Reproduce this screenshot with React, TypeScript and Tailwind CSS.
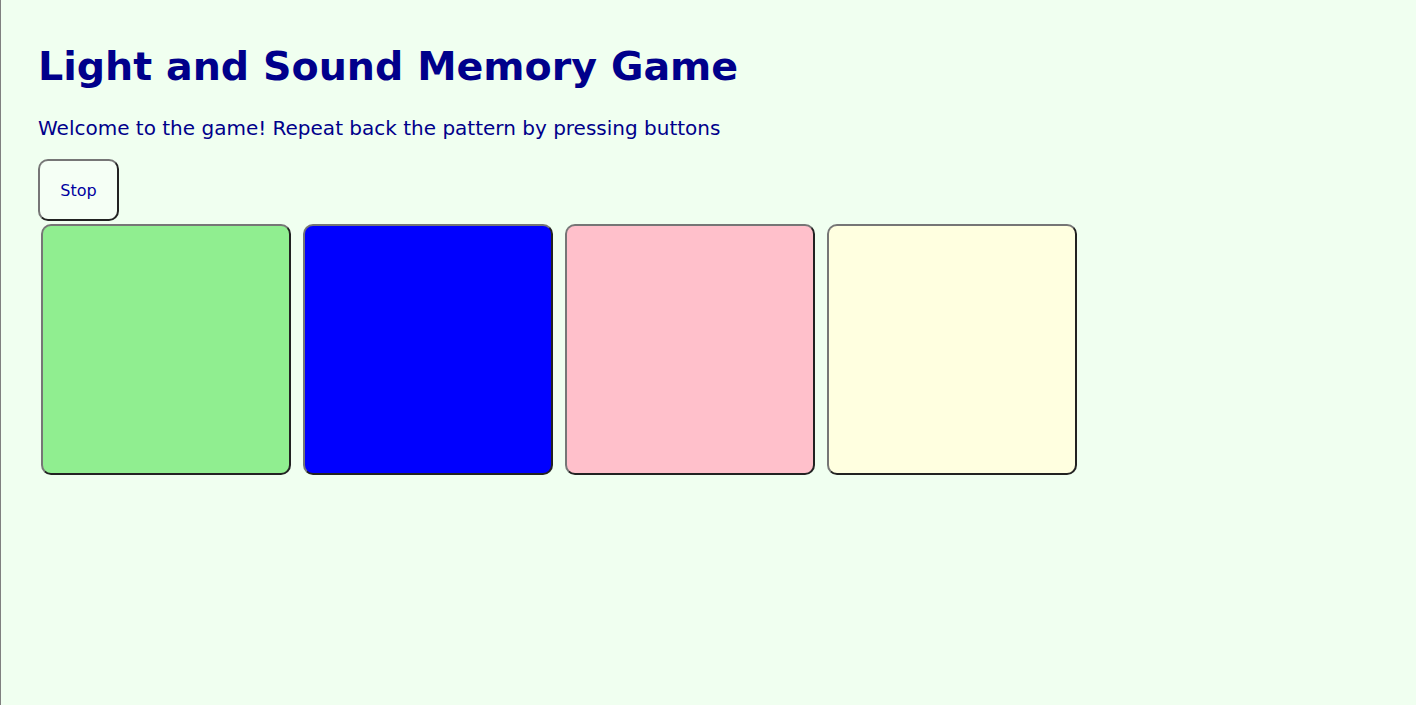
import React from "react";

const pads = [
	{ id: 1, color: "bg-[#90ee90]" },
	{ id: 2, color: "bg-[#0000ff]" },
	{ id: 3, color: "bg-[#ffc0cb]" },
	{ id: 4, color: "bg-[#ffffe0]" },
];

const App = () => {
	return (
		<div className="min-h-[705px] bg-[#f0fff0] border-l border-[#808080] px-[37px] pt-[43px] font-['DejaVu_Sans',Verdana,sans-serif] text-[#00008b]">
			<h1 className="text-[39.6px] font-bold leading-[46px]">
				Light and Sound Memory Game
			</h1>
			<p className="mt-[27px] text-[20px] leading-[24px]">
				Welcome to the game! Repeat back the pattern by pressing buttons
			</p>
			<button className="mt-[19px] w-[81px] h-[62px] pt-[2px] rounded-[10px] border-2 border-t-[#767676] border-l-[#767676] border-b-[#222] border-r-[#222] bg-[#f5fff5] text-[16px] text-[#0000a0] block">
				Stop
			</button>
			<div className="mt-[3px] ml-[3px] flex gap-[12px]">
				{pads.map((pad) => (
					<button
						key={pad.id}
						className={`w-[250px] h-[251px] rounded-[10px] border-2 border-t-[#767676] border-l-[#767676] border-b-[#222] border-r-[#222] ${pad.color}`}
					></button>
				))}
			</div>
		</div>
	);
};

export default App;
